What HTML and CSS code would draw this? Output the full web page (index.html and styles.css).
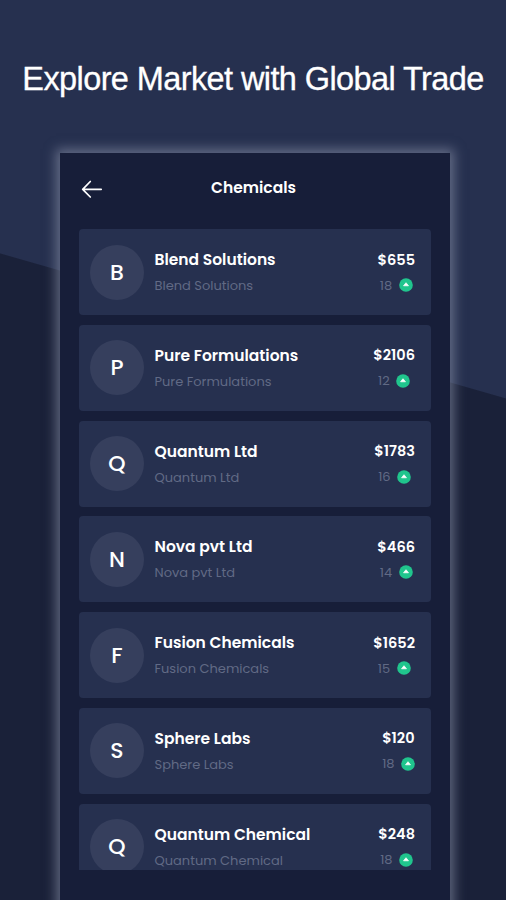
FILE: index.html
```html
<!DOCTYPE html>
<html lang="en">
<head>
    <meta charset="UTF-8">
    <meta name="viewport" content="width=device-width, initial-scale=1.0">
    <title>Chemicals</title>
    <link rel="stylesheet" href="styles.css">
</head>
<body>
    <svg width="0" height="0" class="sprite">
        <symbol id="up" viewBox="0 0 14 14">
            <circle cx="7" cy="7" r="6.8" fill="#20c58d"/>
            <path d="M7 4.7L9.5 7.8H4.5Z" fill="#fff" stroke="#fff" stroke-width="0.7" stroke-linejoin="round"/>
        </symbol>
    </svg>
    <h1 class="headline">Explore Market with Global Trade</h1>
    <div class="screen">
        <div class="topbar">
            <svg class="back" width="22" height="20" viewBox="0 0 22 20" fill="none" stroke="#fff" stroke-width="1.7" stroke-linecap="round" stroke-linejoin="round">
                <path d="M20.2 10.3H1.7M9.3 2.5L1.7 10.3L9.3 18"/>
            </svg>
            <h2>Chemicals</h2>
        </div>
        <div class="list">
            <div class="card">
                <div class="avatar">B</div>
                <div class="info"><div class="name">Blend Solutions</div><div class="sub">Blend Solutions</div></div>
                <div class="value"><div class="price">$655</div><div class="count">18<svg><use href="#up"/></svg></div></div>
            </div>
            <div class="card">
                <div class="avatar">P</div>
                <div class="info"><div class="name">Pure Formulations</div><div class="sub">Pure Formulations</div></div>
                <div class="value"><div class="price">$2106</div><div class="count">12<svg><use href="#up"/></svg></div></div>
            </div>
            <div class="card">
                <div class="avatar">Q</div>
                <div class="info"><div class="name">Quantum Ltd</div><div class="sub">Quantum Ltd</div></div>
                <div class="value"><div class="price">$1783</div><div class="count">16<svg><use href="#up"/></svg></div></div>
            </div>
            <div class="card">
                <div class="avatar">N</div>
                <div class="info"><div class="name">Nova pvt Ltd</div><div class="sub">Nova pvt Ltd</div></div>
                <div class="value"><div class="price">$466</div><div class="count">14<svg><use href="#up"/></svg></div></div>
            </div>
            <div class="card">
                <div class="avatar">F</div>
                <div class="info"><div class="name">Fusion Chemicals</div><div class="sub">Fusion Chemicals</div></div>
                <div class="value"><div class="price">$1652</div><div class="count">15<svg><use href="#up"/></svg></div></div>
            </div>
            <div class="card">
                <div class="avatar">S</div>
                <div class="info"><div class="name">Sphere Labs</div><div class="sub">Sphere Labs</div></div>
                <div class="value"><div class="price">$120</div><div class="count">18<svg><use href="#up"/></svg></div></div>
            </div>
            <div class="card">
                <div class="avatar">Q</div>
                <div class="info"><div class="name">Quantum Chemical</div><div class="sub">Quantum Chemical</div></div>
                <div class="value"><div class="price">$248</div><div class="count">18<svg><use href="#up"/></svg></div></div>
            </div>
        </div>
    </div>
</body>
</html>
```
FILE: styles.css
```css
* {
    box-sizing: border-box;
}
body {
    margin: 0;
    height: 900px;
    overflow: hidden;
    font-family: Poppins, Inter, sans-serif;
    color: #fff;
    background: linear-gradient(196deg, #26304f 0, #26304f 382.5px, #1a2139 383.5px);
}
.sprite {
    position: absolute;
}
.headline {
    margin: 0;
    height: 153px;
    padding-top: 59px;
    font: 400 32.5px/40px "Liberation Sans", Arial, sans-serif;
    letter-spacing: -0.6px;
    text-align: center;
    white-space: nowrap;
    -webkit-text-stroke: 0.3px #fff;
}
.screen {
    width: 390px;
    height: 780px;
    margin-left: 60px;
    padding: 0 19px;
    background: #171e39;
    box-shadow: 0 0 11px 4px rgba(150, 156, 178, 0.55);
}
.topbar {
    display: grid;
    grid-template-columns: 26px 1fr 29px;
    align-items: center;
    height: 76px;
    padding-bottom: 8px;
}
.back {
    margin: 3px 0 0 2px;
}
.topbar h2 {
    margin: 0;
    font-size: 15.5px;
    font-weight: 600;
    text-align: center;
}
.list {
    display: flex;
    flex-direction: column;
    gap: 9.8px;
    height: 641px;
    overflow: hidden;
}
.card {
    display: flex;
    flex: none;
    align-items: center;
    height: 86px;
    padding: 0 16px 0 11px;
    background: #26304f;
    border-radius: 4px;
}
.avatar {
    width: 54px;
    height: 55px;
    margin-right: 10.5px;
    border-radius: 50%;
    background: #363f5d;
    font-size: 22px;
    font-weight: 500;
    line-height: 55px;
    text-align: center;
}
.info {
    flex: 1;
    padding-top: 1px;
    white-space: nowrap;
}
.name {
    font-size: 15.5px;
    font-weight: 600;
    line-height: 26px;
}
.sub {
    font-size: 13px;
    line-height: 25px;
    color: #616a85;
}
.price {
    font-size: 14.5px;
    font-weight: 600;
    line-height: 26px;
}
.count {
    display: flex;
    align-items: center;
    justify-content: center;
    font-size: 13px;
    line-height: 25px;
    color: #616a85;
}
.count svg {
    width: 14px;
    height: 14px;
    margin-left: 6.5px;
}
```
